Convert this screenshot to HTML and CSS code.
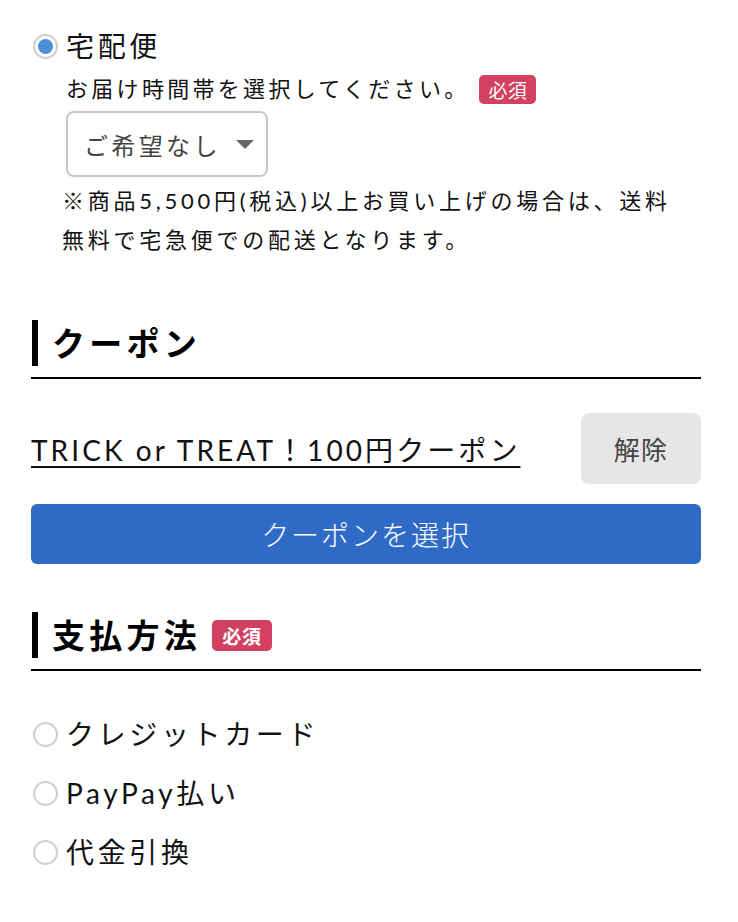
FILE: index.html
```html
<!DOCTYPE html>
<html lang="ja">
<head>
  <meta charset="UTF-8">
  <meta name="viewport" content="width=device-width, initial-scale=1.0">
  <title>お支払い・配送</title>
  <link rel="stylesheet" href="styles.css">
</head>
<body>
  <div class="page">
    <section class="delivery">
      <label class="radio-row"><span class="radio checked"></span>宅配便</label>
      <div class="delivery-body">
        <p class="field-label">お届け時間帯を選択してください。<span class="badge">必須</span></p>
        <div class="select">ご希望なし<span class="caret"></span></div>
        <p class="note">※商品5,500円(税込)以上お買い上げの場合は、送料無料で宅急便での配送となります。</p>
      </div>
    </section>

    <section class="block">
      <div class="section-head">
        <h2 class="section-title">クーポン</h2>
      </div>
      <div class="coupon-row">
        <a href="#" class="coupon-link">TRICK or TREAT！100円クーポン</a>
        <button class="btn-cancel">解除</button>
      </div>
      <button class="btn-primary">クーポンを選択</button>
    </section>

    <section class="block block-pay">
      <div class="section-head">
        <h2 class="section-title">支払方法<span class="badge badge-head">必須</span></h2>
      </div>
      <div class="pay-list">
        <label class="radio-row"><span class="radio"></span>クレジットカード</label>
        <label class="radio-row"><span class="radio"></span>PayPay払い</label>
        <label class="radio-row"><span class="radio"></span>代金引換</label>
      </div>
    </section>
  </div>
</body>
</html>
```

FILE: styles.css
```css
body {
  margin: 0;
  background: #fff;
  color: #111;
  font-family: 'Lato', 'Noto Sans CJK JP', sans-serif;
}
.page {
  padding: 26px 37px 40px 31px;
}
p {
  margin: 0;
}

/* ---- radio ---- */
.radio-row {
  display: flex;
  align-items: center;
  gap: 8px;
  font-size: 28px;
  line-height: 40px;
  letter-spacing: 0.13em;
  color: #111;
}
.radio {
  flex: none;
  width: 25px;
  height: 25px;
  margin-left: 2px;
  box-sizing: border-box;
  border: 2px solid #cfcfcf;
  border-radius: 50%;
  display: flex;
  align-items: center;
  justify-content: center;
}
.radio.checked::after {
  content: "";
  width: 15px;
  height: 15px;
  border-radius: 50%;
  background: #4a8ed6;
}

/* ---- delivery ---- */
.delivery-body {
  padding: 0 24px 0 31px;
}
.field-label {
  margin: 6px 0 0 4px;
  display: flex;
  align-items: center;
  font-size: 22px;
  line-height: 34px;
  letter-spacing: 0.15em;
}
.badge {
  display: inline-block;
  background: #d2415f;
  color: #fff;
  font-family: 'Noto Sans CJK JP', sans-serif;
  font-size: 19px;
  line-height: 29px;
  padding: 0 9px;
  border-radius: 5px;
  letter-spacing: 0.02em;
  margin-left: 10px;
}
.select {
  margin: 5px 0 0 4px;
  width: 202px;
  height: 66px;
  box-sizing: border-box;
  border: 2px solid #c8c8c8;
  border-radius: 8px;
  display: flex;
  align-items: center;
  padding: 0 12px 0 16px;
  font-size: 24px;
  letter-spacing: 0.14em;
  color: #444;
}
.caret {
  margin-left: auto;
  width: 0;
  height: 0;
  border-left: 9px solid transparent;
  border-right: 9px solid transparent;
  border-top: 9px solid #666;
}
.note {
  margin-top: 4px;
  font-size: 22px;
  line-height: 39px;
  letter-spacing: 0.17em;
  color: #111;
}

/* ---- sections ---- */
.block {
  margin-top: 61px;
}
.block-pay {
  margin-top: 48px;
}
.section-head {
  padding-bottom: 11px;
  border-bottom: 2px solid #000;
}
.section-title {
  margin: 0 0 0 1px;
  padding-left: 14px;
  border-left: 6px solid #000;
  display: flex;
  align-items: center;
  font-size: 33px;
  line-height: 46px;
  font-weight: bold;
  letter-spacing: 0.13em;
  color: #000;
}
.badge-head {
  font-size: 19px;
  line-height: 31px;
  font-weight: bold;
  padding: 0 10px;
  margin-left: 11px;
  letter-spacing: 0.04em;
}

/* ---- coupon ---- */
.coupon-row {
  margin-top: 34px;
  display: flex;
  align-items: center;
  justify-content: space-between;
}
.coupon-link {
  font-size: 28px;
  letter-spacing: 0.11em;
  color: #111;
  text-decoration: underline;
  text-underline-offset: 5px;
  text-decoration-thickness: 2px;
}
.btn-cancel {
  width: 120px;
  height: 71px;
  border: none;
  border-radius: 8px;
  background: #e6e6e6;
  color: #444;
  font-family: 'Noto Sans CJK JP', sans-serif;
  font-size: 26px;
  letter-spacing: 0.05em;
  cursor: pointer;
}
.btn-primary {
  display: block;
  width: 100%;
  height: 60px;
  margin-top: 20px;
  border: none;
  border-radius: 6px;
  background: #2f6bc6;
  color: #fff;
  font-family: 'Noto Sans CJK JP', sans-serif;
  font-size: 28px;
  font-weight: 300;
  letter-spacing: 0.07em;
  cursor: pointer;
}

/* ---- payment ---- */
.pay-list {
  margin-top: 43px;
  display: flex;
  flex-direction: column;
  gap: 19px;
}
```
